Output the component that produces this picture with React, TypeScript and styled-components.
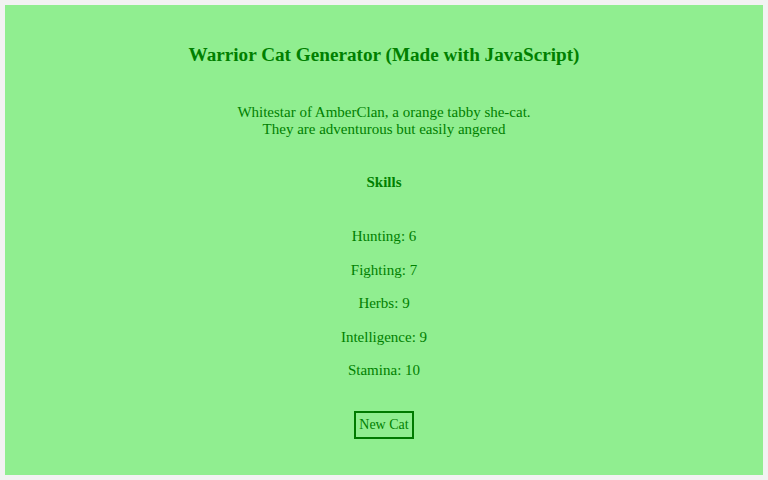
import React from "react";
import styled, { createGlobalStyle } from "styled-components";

const Global = createGlobalStyle`
  html, body { margin: 0; padding: 0; background: #f2f2f2; }
  body { font-family: "Liberation Serif", "Times New Roman", serif; }
`;

const Panel = styled.main`
  margin: 5px;
  height: 470px;
  box-sizing: border-box;
  background: #90ee90;
  color: #008000;
  display: flex;
  flex-direction: column;
  align-items: center;
  text-align: center;
  padding-top: 38px;
`;

const Title = styled.h1`
  margin: 0;
  font-family: "Liberation Serif", "Times New Roman", serif;
  font-size: 19.2px;
  font-weight: bold;
  line-height: 23px;
`;

const Description = styled.p`
  margin: 38px 0 0;
  font-size: 15px;
  line-height: 17px;
`;

const SkillsHeading = styled.h3`
  margin: 36px 0 0;
  font-size: 15px;
  font-weight: bold;
  line-height: 17px;
`;

const SkillList = styled.div`
  margin-top: 37px;
  display: flex;
  flex-direction: column;
  gap: 16.5px;
`;

const Skill = styled.p`
  margin: 0;
  font-size: 15px;
  line-height: 17px;
`;

const Button = styled.button`
  margin-top: 32px;
  font-family: "Liberation Serif", "Times New Roman", serif;
  font-size: 14px;
  color: #008000;
  background: transparent;
  border: 2px solid #007a00;
  padding: 4px 3px;
  cursor: pointer;
`;

const skills: [string, number][] = [
  ["Hunting", 6],
  ["Fighting", 7],
  ["Herbs", 9],
  ["Intelligence", 9],
  ["Stamina", 10],
];

export default function App() {
  return (
    <>
      <Global />
      <Panel>
        <Title>Warrior Cat Generator (Made with JavaScript)</Title>
        <Description>
          Whitestar of AmberClan, a orange tabby she-cat.
          <br />
          They are adventurous but easily angered
        </Description>
        <SkillsHeading>Skills</SkillsHeading>
        <SkillList>
          {skills.map(([name, value]) => (
            <Skill key={name}>
              {name}: {value}
            </Skill>
          ))}
        </SkillList>
        <Button>New Cat</Button>
      </Panel>
    </>
  );
}
